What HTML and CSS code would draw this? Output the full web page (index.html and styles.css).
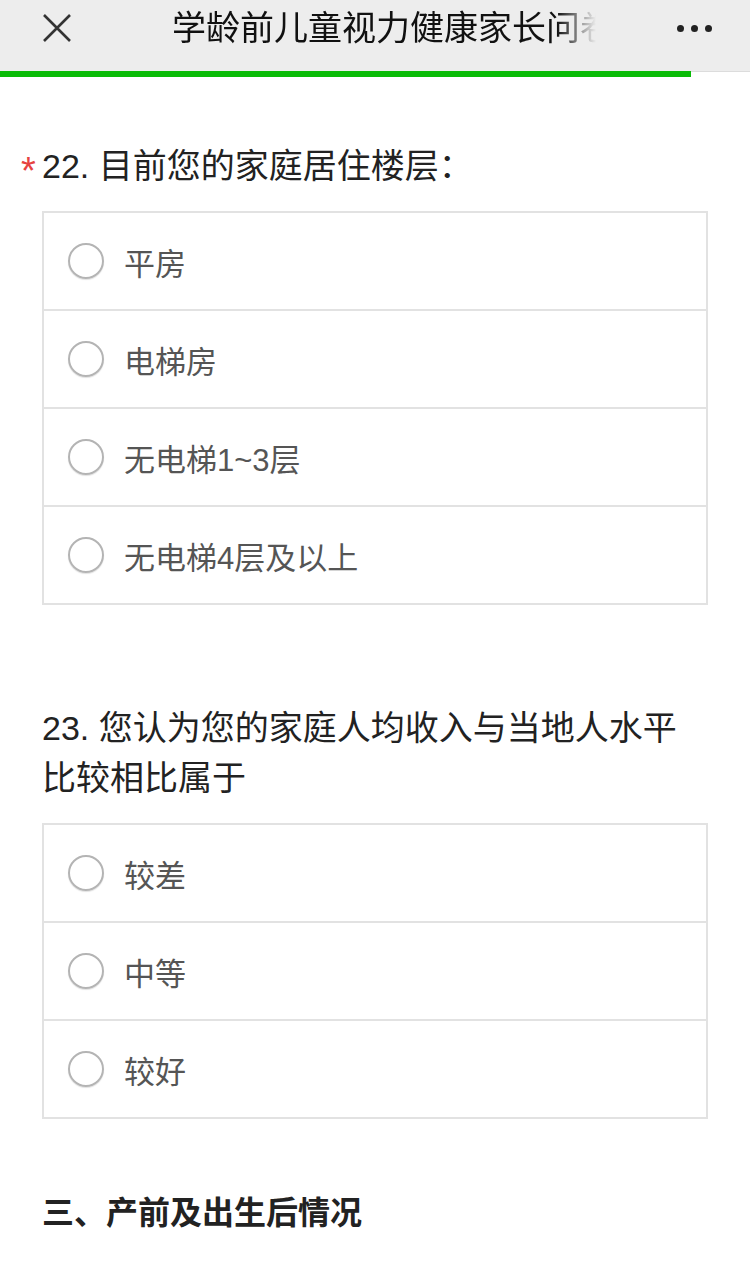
FILE: index.html
```html
<!DOCTYPE html>
<html lang="zh-CN">
<head>
<meta charset="utf-8">
<title>学龄前儿童视力健康家长问卷</title>
<link rel="stylesheet" href="styles.css">
</head>
<body>
<header class="navbar">
  <div class="nav-row">
    <div class="nav-close">
      <svg width="30" height="30" viewBox="0 0 30 30"><path d="M2 2 L28 28 M28 2 L2 28" stroke="#333" stroke-width="2.6" fill="none"/></svg>
    </div>
    <div class="nav-title">学龄前儿童视力健康家长问卷</div>
    <div class="nav-more">
      <span class="dot"></span><span class="dot"></span><span class="dot"></span>
    </div>
  </div>
</header>
<div class="progress"><div class="progress-bar"></div></div>

<main class="content">
  <section class="question q22">
    <h2 class="q-title"><span class="req">*</span>22. 目前您的家庭居住楼层：</h2>
    <ul class="options">
      <li class="option"><span class="radio"></span><span class="opt-text">平房</span></li>
      <li class="option"><span class="radio"></span><span class="opt-text">电梯房</span></li>
      <li class="option"><span class="radio"></span><span class="opt-text">无电梯1~3层</span></li>
      <li class="option"><span class="radio"></span><span class="opt-text">无电梯4层及以上</span></li>
    </ul>
  </section>

  <section class="question q23">
    <h2 class="q-title">23. 您认为您的家庭人均收入与当地人水平比较相比属于</h2>
    <ul class="options">
      <li class="option"><span class="radio"></span><span class="opt-text">较差</span></li>
      <li class="option"><span class="radio"></span><span class="opt-text">中等</span></li>
      <li class="option"><span class="radio"></span><span class="opt-text">较好</span></li>
    </ul>
  </section>

  <h2 class="section-title">三、产前及出生后情况</h2>
</main>
</body>
</html>
```

FILE: styles.css
```css
* { box-sizing: border-box; }
html, body { margin: 0; padding: 0; background: #fff; }
body {
  width: 750px;
  font-family: "Liberation Sans", "Noto Sans CJK SC", sans-serif;
  color: #222;
}
.navbar {
  height: 72px;
  background: #ededed;
}
.nav-row {
  height: 56px;
  display: flex;
  align-items: center;
}
.nav-close {
  width: 172px;
  padding-left: 42px;
  display: flex;
  align-items: center;
  height: 56px;
  flex: none;
}
.nav-title {
  width: 426px;
  flex: none;
  font-size: 34px;
  line-height: 56px;
  color: #111;
  white-space: nowrap;
  overflow: hidden;
  -webkit-mask-image: linear-gradient(to right, #000 0, #000 385px, transparent 424px);
  mask-image: linear-gradient(to right, #000 0, #000 385px, transparent 424px);
}
.nav-more {
  margin-left: auto;
  padding-right: 38px;
  display: flex;
  gap: 7px;
  align-items: center;
}
.dot {
  width: 7px;
  height: 7px;
  border-radius: 50%;
  background: #222;
}
.progress {
  height: 6px;
  border-top: 1px solid #dcdcdc;
  background: #fff;
  margin-top: -1px;
}
.progress-bar {
  width: 691px;
  height: 6px;
  margin-top: -1px;
  background: #09bb07;
}
.content {
  padding: 64px 42px 40px 42px;
}
.question { margin: 0; }
.q23 { margin-top: 98px; }
.q-title {
  margin: 0 0 20px 0;
  font-size: 34px;
  line-height: 50px;
  font-weight: normal;
  color: #222;
}
.req {
  display: inline-block;
  width: 21px;
  margin-left: -21px;
  color: #e64340;
  font-size: 38px;
  line-height: 1;
  height: 34px;
  vertical-align: top;
  position: relative;
  top: 11px;
}
.options {
  list-style: none;
  margin: 0;
  padding: 0;
  border: 2px solid #e2e2e2;
}
.option {
  height: 98px;
  display: flex;
  align-items: center;
  padding-left: 24px;
  border-top: 2px solid #e2e2e2;
}
.option:first-child {
  border-top: none;
  height: 96px;
}
.radio {
  width: 36px;
  height: 36px;
  border-radius: 50%;
  border: 2px solid #b4b4b4;
  box-shadow: 0 1px 1px rgba(0,0,0,0.12);
  flex: none;
}
.opt-text {
  margin-left: 20px;
  font-size: 31px;
  color: #555;
}
.section-title {
  margin: 69px 0 0 0;
  font-size: 32px;
  line-height: 50px;
  font-weight: bold;
  color: #222;
}
```
